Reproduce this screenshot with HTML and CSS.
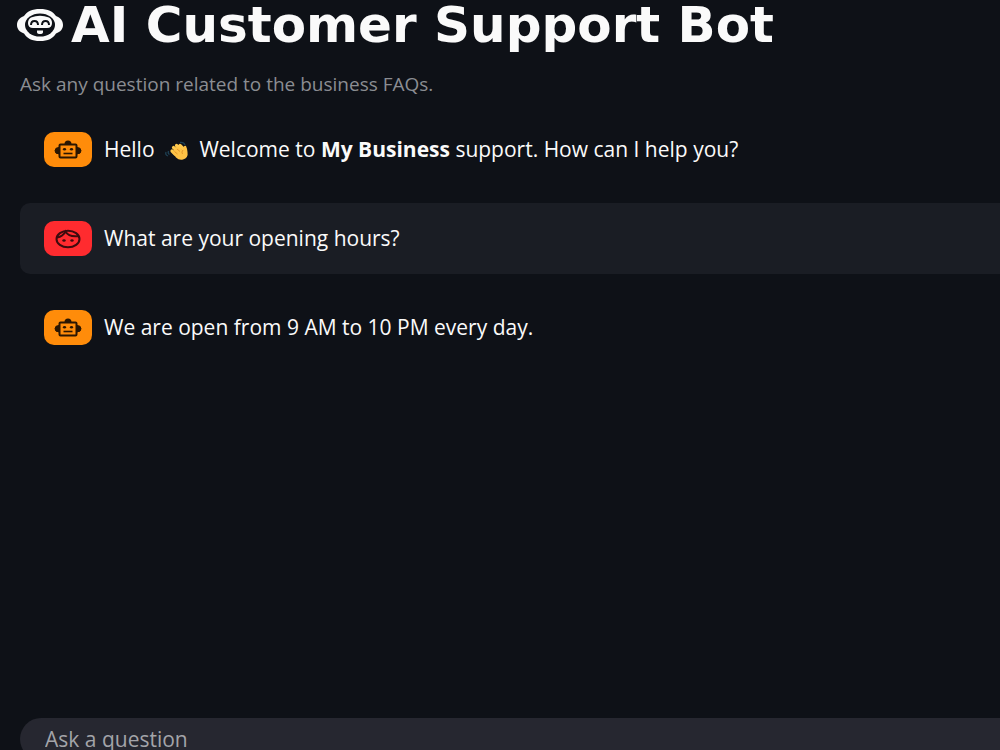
FILE: index.html
```
<!DOCTYPE html>
<html lang="en">
<head>
    <meta charset="UTF-8">
    <meta name="viewport" content="width=device-width, initial-scale=1.0">
    <title>AI Customer Support Bot</title>
    <link rel="stylesheet" href="styles.css">
</head>
<body>

    <!-- Shared icons -->
    <svg class="icon-defs" aria-hidden="true">
        <symbol id="icon-bot" viewBox="0 0 28 20">
            <path d="M10.500 4a3.500 3.500 0 0 1 7 0v1h-7z" fill="#2b1602"/>
            <path d="M5 7.500a4 3.200 0 0 0 0 6.400zM23 7.500a4 3.200 0 0 1 0 6.400z" fill="#2b1602" stroke="#2b1602"/>
            <rect x="5.500" y="4.500" width="17" height="13" rx="1" fill="none" stroke="#2b1602" stroke-width="2"/>
            <ellipse cx="10.500" cy="9.300" rx="1.600" ry="1.200" fill="#2b1602"/>
            <ellipse cx="17.500" cy="9.300" rx="1.600" ry="1.200" fill="#2b1602"/>
            <path d="M9.500 13.500h9" stroke="#2b1602" stroke-width="1.600"/>
        </symbol>
    </svg>

    <div class="app">
        <!-- Page title -->
        <div class="header">
            <h1>
                <svg class="title-icon" viewBox="0 0 46 32" aria-hidden="true">
                    <path d="M23 0C31 0 36 2.500 39 7C43.500 8.500 46 12 46 16S43.500 23 39 24.500C36 29.500 31 32 23 32S10 29.500 7 24.500C2.500 23 0 20 0 16S2.500 8.500 7 7C10 2.500 15 0 23 0z" fill="#fafafa"/>
                    <ellipse cx="23" cy="16" rx="15" ry="11.500" fill="#0e1117"/>
                    <path d="M14 8.500Q23 5 32 8.500Q35 10 35 14Q35 19 30 19H16Q11 19 11 14Q11 10 14 8.500z" fill="#fafafa"/>
                    <path d="M14 16C14 10.500 21 10.500 21 16M25 16C25 10.500 32 10.500 32 16" fill="none" stroke="#0e1117" stroke-width="2"/>
                    <path d="M20 21.500h6v2a2.500 2 0 0 1-2.500 1.500h-1a2.500 2 0 0 1-2.500-1.500z" fill="#fafafa"/>
                </svg>
                AI Customer Support Bot
            </h1>
            <p class="caption">Ask any question related to the business FAQs.</p>
        </div>

        <!-- Conversation -->
        <div class="chat">
            <div class="message">
                <div class="avatar avatar-bot"><svg class="avatar-icon"><use href="#icon-bot"/></svg></div>
                <p>Hello
                    <svg class="wave" viewBox="0 0 26 20" role="img" aria-label="waving hand">
                        <path d="M2 11q-1 3 2 4M4.500 10q-1 2.500 1 3.500M16 1.500q4-.5 5 2.500" fill="none" stroke="#1e4054" stroke-width="1.300"/>
                        <path d="M11 13L8 10M13.500 10L9.500 6.500M16 8L12.500 4.500M19 7.500L16 4.500" stroke="#ffc94d" stroke-width="3.200" stroke-linecap="round"/>
                        <path d="M8 11L14 6L19 9Q19.500 4 22 5Q23 7 23.500 11Q24.500 17 19 18.500Q15 19.500 12 16.500z" fill="#ffc245"/>
                        <path d="M10.500 10.500l3 2.500M13 8l3 2.500M19 9q-2 2-.5 4" fill="none" stroke="#d98b22" stroke-width=".8"/>
                    </svg>
                    Welcome to <strong>My Business</strong> support. How can I help you?</p>
            </div>
            <div class="message message-user">
                <div class="avatar avatar-user">
                    <svg class="avatar-icon" viewBox="0 0 28 20" aria-hidden="true">
                        <ellipse cx="14" cy="10" rx="11.500" ry="8.300" fill="none" stroke="#3c0b0e" stroke-width="2"/>
                        <path d="M3 8.500Q9 7.500 11.500 2.500Q15 8.500 25 7" fill="none" stroke="#3c0b0e" stroke-width="2"/>
                        <ellipse cx="10" cy="11.500" rx="1.700" ry="1.300" fill="#3c0b0e"/>
                        <ellipse cx="18" cy="11.500" rx="1.700" ry="1.300" fill="#3c0b0e"/>
                    </svg>
                </div>
                <p>What are your opening hours?</p>
            </div>
            <div class="message">
                <div class="avatar avatar-bot"><svg class="avatar-icon"><use href="#icon-bot"/></svg></div>
                <p>We are open from 9 AM to 10 PM every day.</p>
            </div>
        </div>

        <!-- Question box -->
        <form class="ask">
            <input type="text" id="question" aria-label="Ask a question" placeholder="Ask a question">
        </form>
    </div>

</body>
</html>
```

FILE: styles.css
```
* {
    box-sizing: border-box;
}

body {
    margin: 0;
    background-color: #0e1117;
    color: #fafafa;
    font-family: "Open Sans", "Noto Sans", sans-serif;
    font-size: 21px;
    font-weight: 500;
}

h1,
p {
    margin: 0;
}

.icon-defs {
    display: none;
}

.app {
    display: flex;
    flex-direction: column;
    height: 100vh;
    padding-left: 20px;
}

/* Title */
.header {
    margin-left: -3px;
}

.header h1 {
    display: flex;
    align-items: center;
    gap: 8px;
    font-family: "DejaVu Sans", Verdana, sans-serif;
    font-size: 50px;
    line-height: 50px;
    font-weight: 700;
    white-space: nowrap;
}

.title-icon {
    flex: none;
    width: 46px;
    height: 32px;
}

.caption {
    margin: 20px 0 0 3px;
    color: #8b8d92;
    font-size: 19px;
    line-height: 28px;
}

/* Conversation */
.chat {
    display: flex;
    flex: 1;
    flex-direction: column;
    gap: 18px;
    min-height: 0;
    padding-top: 16px;
}

.message {
    display: flex;
    align-items: center;
    gap: 12px;
    padding: 18px 24px;
    border-radius: 10px 0 0 10px;
    line-height: 35px;
    white-space: nowrap;
}

.message-user {
    background-color: #1a1d24;
}

.avatar {
    display: flex;
    flex: none;
    align-items: center;
    justify-content: center;
    width: 48px;
    height: 35px;
    border-radius: 10px;
}

.avatar-bot {
    background-color: #ff8c0a;
}

.avatar-user {
    background-color: #ff2b2f;
}

.avatar-icon {
    width: 28px;
    height: 20px;
}

.wave {
    width: 26px;
    height: 20px;
    margin: 0 4px;
    vertical-align: -4px;
}

/* Question box, runs off the bottom of the window */
.ask {
    flex: none;
    height: 32px;
    overflow: hidden;
}

.ask input {
    width: 100%;
    height: 42px;
    padding: 0 25px;
    border: 0;
    border-radius: 30px 0 0 30px;
    outline: none;
    background-color: #262730;
    color: #fafafa;
    font: inherit;
}

.ask input::placeholder {
    color: #a3a4a9;
    opacity: 1;
}
```
